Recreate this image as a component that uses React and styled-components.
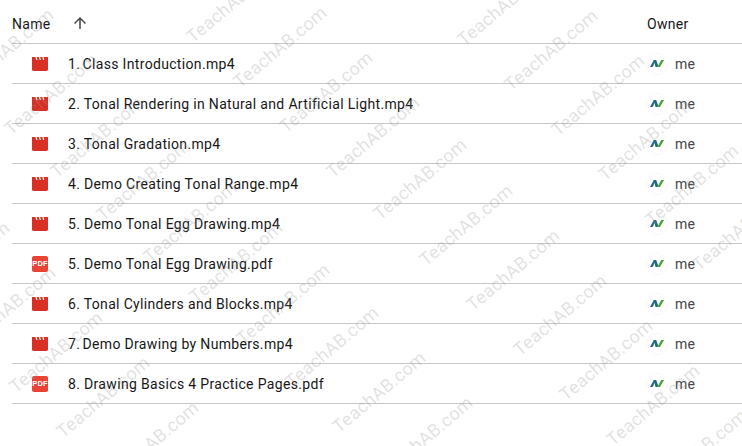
import React from 'react';
import styled, { createGlobalStyle } from 'styled-components';

const GlobalStyle = createGlobalStyle`
  html, body {
    margin: 0;
    padding: 0;
    background: #fff;
    overflow: hidden;
  }
`;

const Page = styled.div`
  position: relative;
  width: 742px;
  height: 446px;
  overflow: hidden;
  padding-left: 12px;
  box-sizing: border-box;
  font-family: Roboto, "Liberation Sans", sans-serif;
  color: #171717;
`;

const HeaderRow = styled.div`
  display: grid;
  grid-template-columns: 635px 1fr;
  height: 39px;
  padding-top: 4px;
  align-items: center;
  border-bottom: 1px solid #c7c7c7;
  font-size: 14px;
  letter-spacing: 0.3px;
`;

const NameHead = styled.div`
  display: flex;
  align-items: center;
  gap: 20px;
`;

const SortIcon = styled.svg`
  width: 18px;
  height: 18px;
  margin-top: -1px;
  fill: #444746;
`;

const FileRow = styled.div`
  display: grid;
  grid-template-columns: 635px 1fr;
  height: 39px;
  align-items: center;
  border-bottom: 1px solid #c7c7c7;
  font-size: 14px;
`;

const NameCell = styled.div`
  display: flex;
  align-items: center;
  padding-left: 20px;
  gap: 20px;
`;

const FileName = styled.span`
  letter-spacing: 0.33px;
  white-space: nowrap;
`;

// 1. and 7. sit closer to the title than the other numbers
const FileNumber = styled.span`
  margin-right: ${(p) => (p.$tight ? '-1.5px' : '0')};
`;

const OwnerCell = styled.div`
  display: flex;
  align-items: center;
  gap: 8px;
`;

const OwnerName = styled.span`
  color: #444746;
  letter-spacing: 0.3px;
`;

const Avatar = styled.span`
  display: flex;
  align-items: center;
  justify-content: center;
  width: 20px;
  height: 20px;
  border-radius: 50%;
  box-shadow: 0 0 0 1px #f8f8f8;
`;

const VideoGlyph = styled.svg`
  display: block;
  width: 16px;
  height: 16px;
`;

const PdfBadge = styled.span`
  display: flex;
  align-items: center;
  justify-content: center;
  width: 16px;
  height: 16px;
  border-radius: 2px;
  background: #ea4335;
  color: #fff;
  font: 700 7.5px "Liberation Sans", sans-serif;
  letter-spacing: 0.1px;
`;

const Watermark = styled.span`
  position: absolute;
  transform-origin: 0 100%;
  transform: rotate(-40deg);
  font: 400 18px/18px Roboto, "Liberation Sans", sans-serif;
  letter-spacing: 0.3px;
  color: rgba(150, 150, 150, 0.28);
  white-space: nowrap;
  pointer-events: none;
`;

const files = [
  { num: '1.', name: 'Class Introduction.mp4', kind: 'video', tight: true },
  { num: '2.', name: 'Tonal Rendering in Natural and Artificial Light.mp4', kind: 'video' },
  { num: '3.', name: 'Tonal Gradation.mp4', kind: 'video' },
  { num: '4.', name: 'Demo Creating Tonal Range.mp4', kind: 'video' },
  { num: '5.', name: 'Demo Tonal Egg Drawing.mp4', kind: 'video' },
  { num: '5.', name: 'Demo Tonal Egg Drawing.pdf', kind: 'pdf' },
  { num: '6.', name: 'Tonal Cylinders and Blocks.mp4', kind: 'video' },
  { num: '7.', name: 'Demo Drawing by Numbers.mp4', kind: 'video', tight: true },
  { num: '8.', name: 'Drawing Basics 4 Practice Pages.pdf', kind: 'pdf' },
];

// start points (bottom-left of the T) of each diagonal of the watermark
const stamps = [
  [-80, 300], [-34, 345], [13, 390], [60, 435], [109, 480],
  [-36, 87], [8, 132], [54, 175], [100, 218], [147, 260], [193, 300], [240, 342], [289, 385], [336, 430], [383, 475],
  [190, 40], [237, 85], [283, 130], [330, 175], [377, 217], [423, 263], [470, 308], [517, 353], [563, 398], [610, 443], [657, 488],
  [414, -2], [461, 43], [508, 88], [555, 133], [602, 178], [649, 223], [696, 268],
];

const VideoIcon = () => (
  <VideoGlyph viewBox="0 0 16 16">
    <path
      fill="#d93025"
      d="M0 1h3.4l1 3h1.2l-1-3h2.2l1 3H9l-1-3h2.2l1 3h1.2l-1-3H16v12.6a1.4 1.4 0 0 1-1.4 1.4H1.4A1.4 1.4 0 0 1 0 13.6z"
    />
  </VideoGlyph>
);

const OwnerLogo = () => (
  <svg width="14" height="7" viewBox="0 0 14 7">
    <path fill="#1b6ea8" d="M0 7 3.8 0h2.4L2.6 7z" />
    <path fill="#1f6f6a" d="M3.8 0h2.4l2 5.5L7.4 7H5.6z" />
    <path fill="#4c9f38" d="M7.4 7 11.2 0H14l-4 7z" />
  </svg>
);

export default function App() {
  return (
    <Page>
      <GlobalStyle />
      <HeaderRow>
        <NameHead>
          <span>Name</span>
          <SortIcon viewBox="0 0 24 24">
            <path d="M13 20h-2V7.8l-5.6 5.6L4 12l8-8 8 8-1.4 1.4L13 7.8z" />
          </SortIcon>
        </NameHead>
        <span>Owner</span>
      </HeaderRow>
      {files.map((file) => (
        <FileRow key={file.name}>
          <NameCell>
            {file.kind === 'pdf' ? <PdfBadge>PDF</PdfBadge> : <VideoIcon />}
            <FileName>
              <FileNumber $tight={file.tight}>{file.num}</FileNumber> {file.name}
            </FileName>
          </NameCell>
          <OwnerCell>
            <Avatar>
              <OwnerLogo />
            </Avatar>
            <OwnerName>me</OwnerName>
          </OwnerCell>
        </FileRow>
      ))}
      {stamps.map(([x, y]) => (
        <Watermark key={`${x}-${y}`} style={{ left: x + 5, top: y - 12 }}>
          TeachAB.com
        </Watermark>
      ))}
    </Page>
  );
}
